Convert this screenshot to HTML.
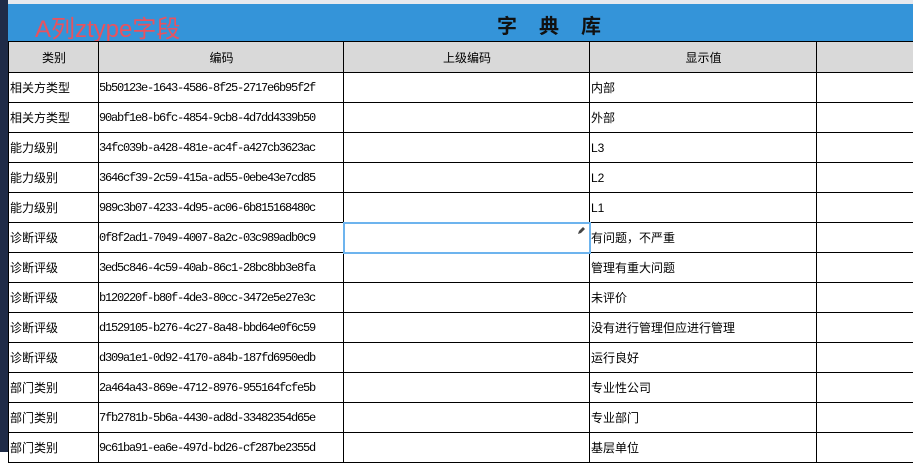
<!DOCTYPE html>
<html><head><meta charset="utf-8"><style>
body{margin:0;width:913px;height:452px;overflow:hidden;background:#fff;font-family:"Liberation Sans","Noto Sans CJK SC",sans-serif;position:relative}
#side{position:absolute;left:0;top:0;width:8px;height:452px;background:#1f2b47}
#topline{position:absolute;left:8px;top:0;width:905px;height:4px;background:#e6e9ee}
#banner{position:absolute;left:8px;top:4px;width:905px;height:38px;background:#3494d9}
#red{position:absolute;left:27px;top:5px;font-size:24px;color:#e9525e;font-family:"Liberation Sans","Noto Sans CJK SC",sans-serif}
#title{position:absolute;left:489px;top:6px;font-size:20px;font-weight:bold;color:#111;letter-spacing:22px}
table{position:absolute;left:8px;top:41px;border-collapse:collapse;table-layout:fixed;width:1000px}
td{border:1px solid #000;height:29px;padding:0 0 0 1px;font-size:12px;color:#000;white-space:nowrap;overflow:hidden;box-sizing:border-box}
tr{height:30px}
tr.h td{background:#d9d9d9;text-align:center;font-size:12px;height:31px}
td.c{font-family:"Liberation Mono",monospace;font-size:12px;letter-spacing:-1.2px;padding-left:0}
td.sel{outline:2px solid #6db4ee;outline-offset:-1px;position:relative}
</style></head><body>
<div id="side"></div><div id="topline"></div>
<div id="banner"><div id="red">A列ztype字段</div><div id="title">字典库</div></div>
<table>
<colgroup><col style="width:90px"><col style="width:245px"><col style="width:246px"><col style="width:227px"><col style="width:192px"></colgroup>
<tr class="h"><td>类别</td><td>编码</td><td>上级编码</td><td>显示值</td><td></td></tr>
<tr><td>相关方类型</td><td class="c">5b50123e-1643-4586-8f25-2717e6b95f2f</td><td></td><td>内部</td><td></td></tr>
<tr><td>相关方类型</td><td class="c">90abf1e8-b6fc-4854-9cb8-4d7dd4339b50</td><td></td><td>外部</td><td></td></tr>
<tr><td>能力级别</td><td class="c">34fc039b-a428-481e-ac4f-a427cb3623ac</td><td></td><td>L3</td><td></td></tr>
<tr><td>能力级别</td><td class="c">3646cf39-2c59-415a-ad55-0ebe43e7cd85</td><td></td><td>L2</td><td></td></tr>
<tr><td>能力级别</td><td class="c">989c3b07-4233-4d95-ac06-6b815168480c</td><td></td><td>L1</td><td></td></tr>
<tr><td>诊断评级</td><td class="c">0f8f2ad1-7049-4007-8a2c-03c989adb0c9</td><td class="sel"><svg style="position:absolute;right:3px;top:3px" width="9" height="9" viewBox="0 0 9 9"><path d="M1 8 L2 5 L6 1 L8 3 L4 7 Z" fill="#444"/></svg></td><td>有问题，不严重</td><td></td></tr>
<tr><td>诊断评级</td><td class="c">3ed5c846-4c59-40ab-86c1-28bc8bb3e8fa</td><td></td><td>管理有重大问题</td><td></td></tr>
<tr><td>诊断评级</td><td class="c">b120220f-b80f-4de3-80cc-3472e5e27e3c</td><td></td><td>未评价</td><td></td></tr>
<tr><td>诊断评级</td><td class="c">d1529105-b276-4c27-8a48-bbd64e0f6c59</td><td></td><td>没有进行管理但应进行管理</td><td></td></tr>
<tr><td>诊断评级</td><td class="c">d309a1e1-0d92-4170-a84b-187fd6950edb</td><td></td><td>运行良好</td><td></td></tr>
<tr><td>部门类别</td><td class="c">2a464a43-869e-4712-8976-955164fcfe5b</td><td></td><td>专业性公司</td><td></td></tr>
<tr><td>部门类别</td><td class="c">7fb2781b-5b6a-4430-ad8d-33482354d65e</td><td></td><td>专业部门</td><td></td></tr>
<tr><td>部门类别</td><td class="c">9c61ba91-ea6e-497d-bd26-cf287be2355d</td><td></td><td>基层单位</td><td></td></tr>
</table>
</body></html>
